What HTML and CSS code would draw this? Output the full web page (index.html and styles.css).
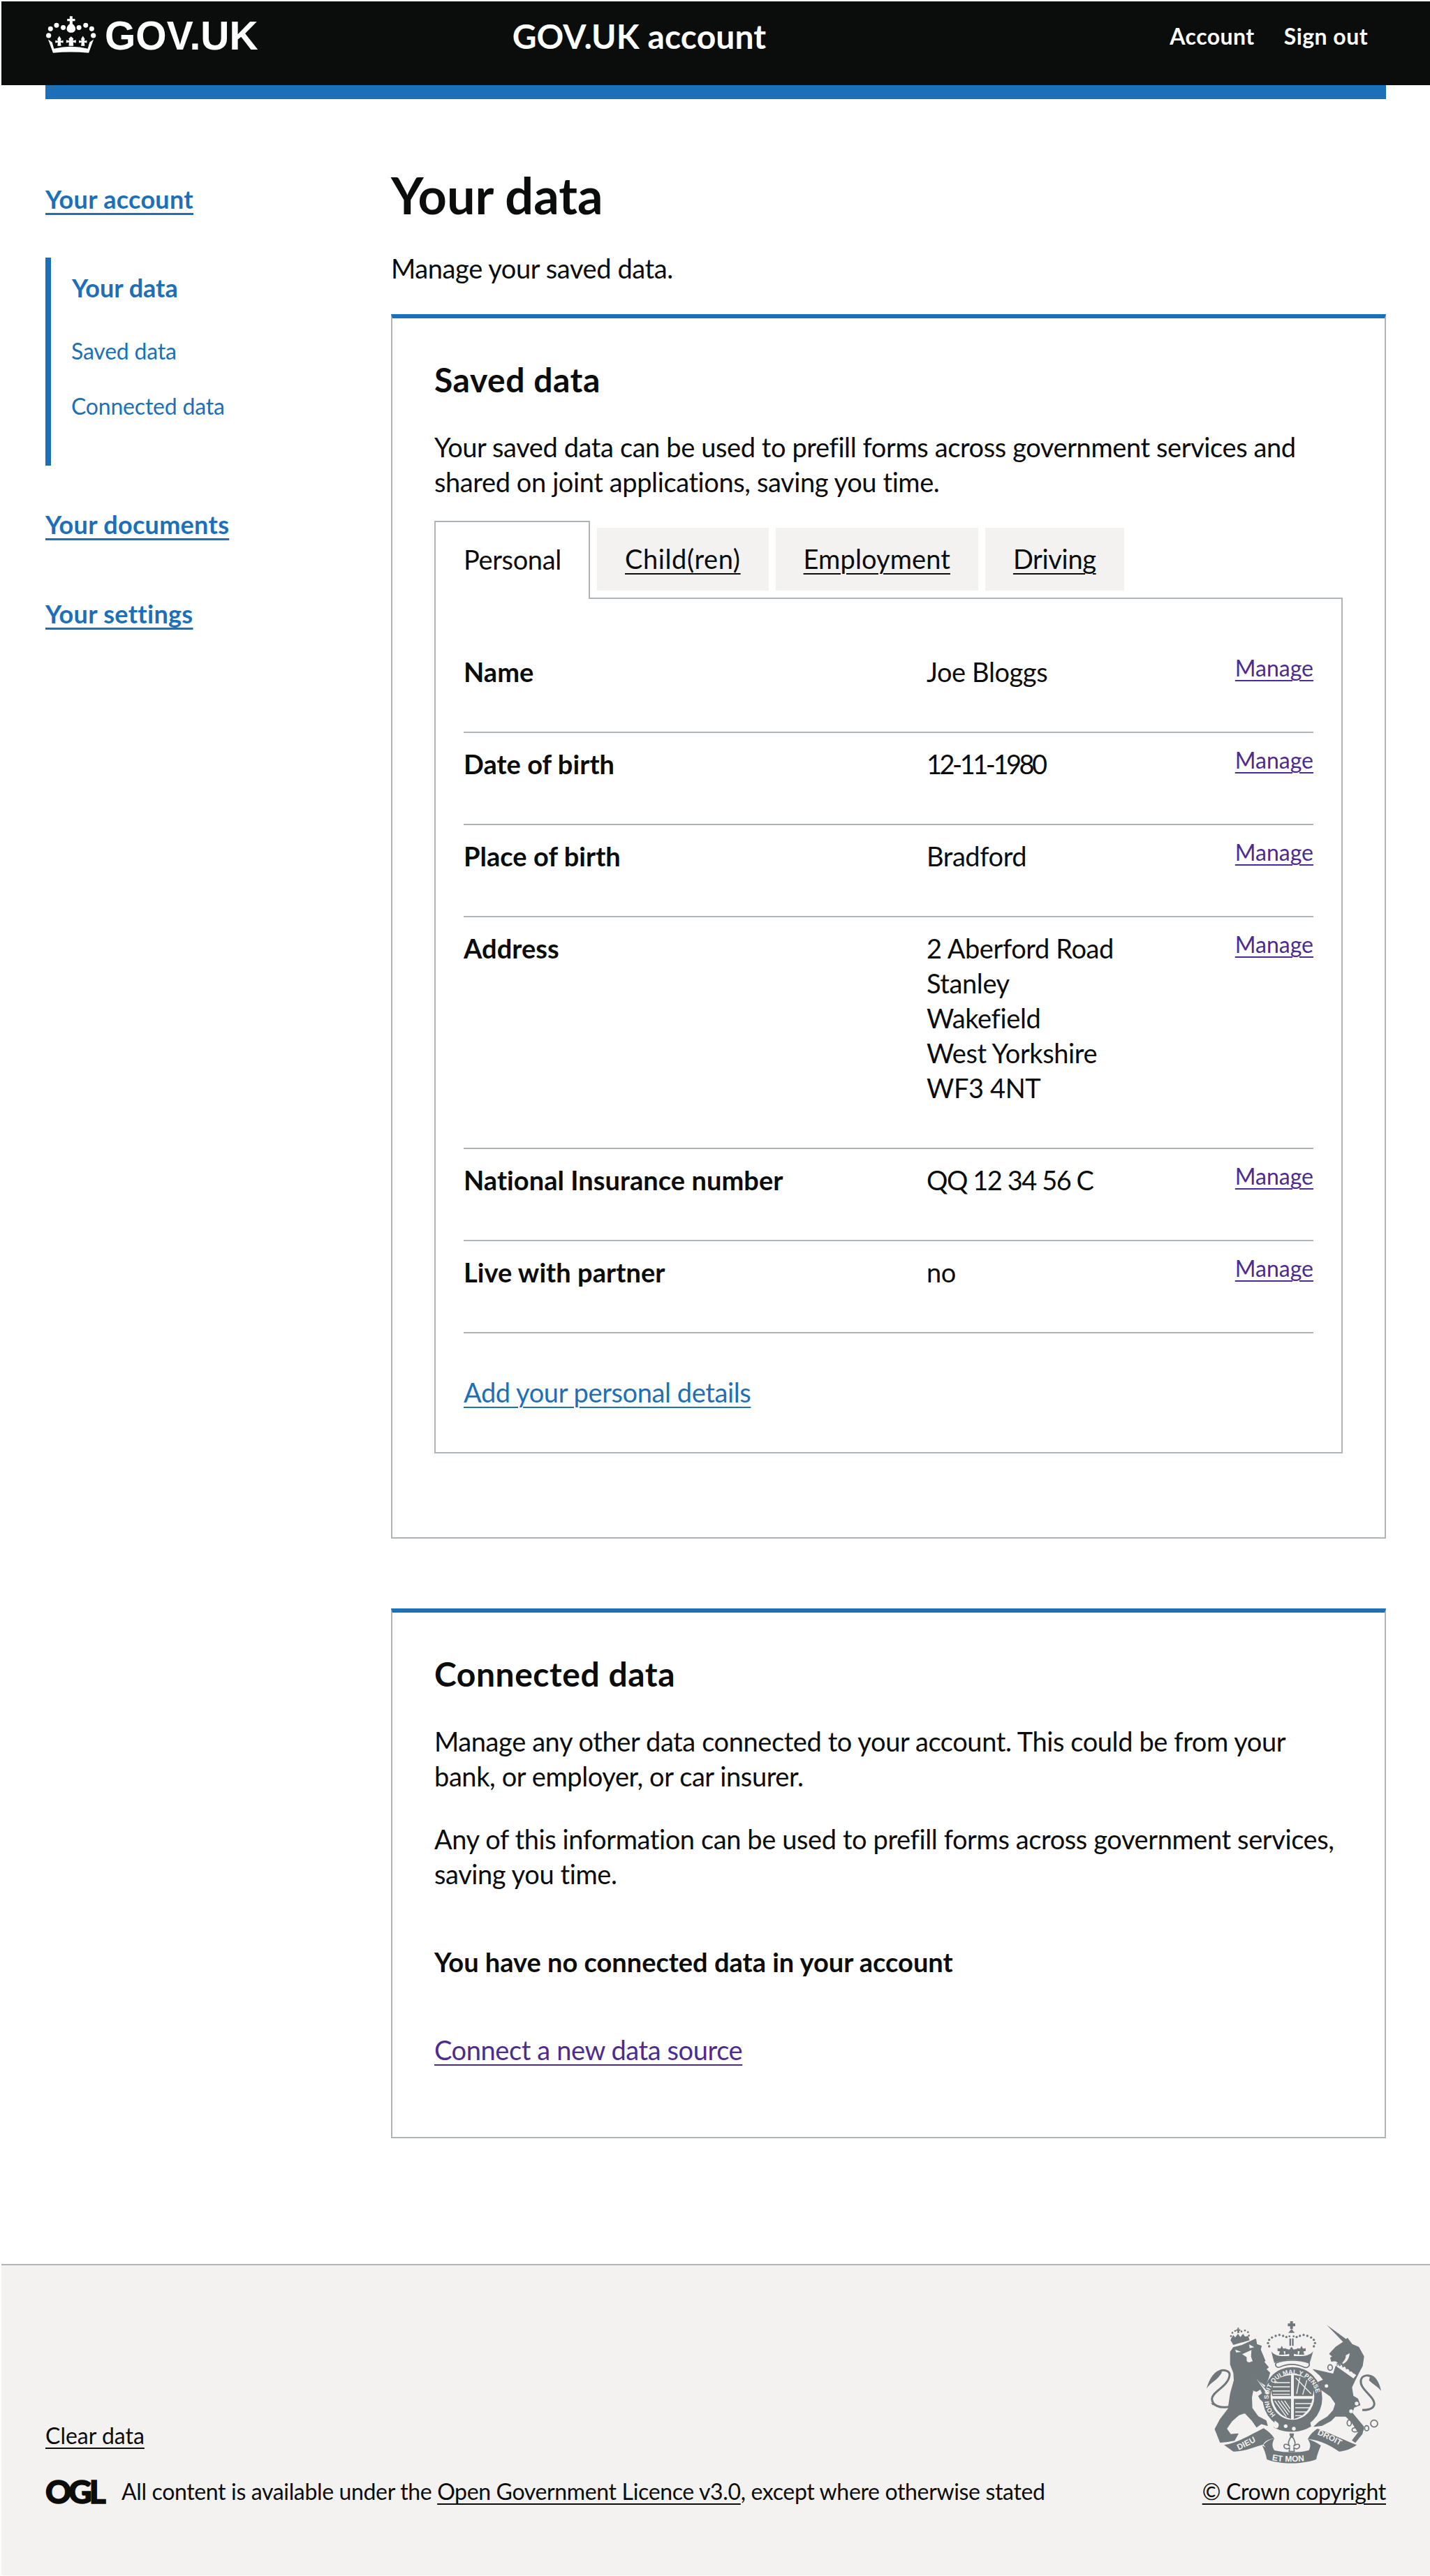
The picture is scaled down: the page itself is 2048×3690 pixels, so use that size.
FILE: index.html
```html
<!doctype html>
<html lang="en">
<head>
<meta charset="utf-8">
<title>Your data - GOV.UK account</title>
<link rel="stylesheet" href="styles.css">
</head>
<body>
<header class="topbar">
  <a class="brand" href="#">
    <svg class="crown" viewBox="198 70 217 158" aria-hidden="true">
      <g fill="#fff">
        <circle cx="209" cy="153" r="11"/><circle cx="402" cy="153" r="11"/>
        <circle cx="217" cy="124" r="10.5"/><circle cx="395" cy="124" r="10.5"/>
        <circle cx="243" cy="109" r="10.5"/><circle cx="369" cy="109" r="10.5"/>
        <circle cx="272" cy="119" r="10.5"/><circle cx="340" cy="119" r="10.5"/>
        <path d="M300,70h12v11h11v10h-11v12c9,6 13,14 13,22c0,9 -8,16 -19,16s-19,-7 -19,-16c0,-8 4,-16 13,-22v-12h-11v-10h11z"/>
        <path d="M306,157l10,9l-2,9l13,-3v13l-12,-3l1,16h-20l1,-16l-12,3v-13l13,3l-2,-9z"/>
        <path d="M255,155l8,13l-2,9l11,-3v11l-11,-2l2,15h-16l2,-15l-11,2v-11l11,3l-2,-9z"/>
        <path d="M357,155l8,13l-2,9l11,-3v11l-11,-2l2,15h-16l2,-15l-11,2v-11l11,3l-2,-9z"/>
        <path d="M207,170 L224,182 L232,210 Q306,192 378,210 L386,182 L403,170 L382,228 Q306,220 228,228 Z"/>
      </g>
    </svg>
    <span class="brand-name">GOV.UK</span>
  </a>
  <a class="service" href="#">GOV.UK account</a>
  <nav class="top-nav">
    <a href="#">Account</a>
    <a href="#">Sign out</a>
  </nav>
</header>

<div class="page">
  <div class="blue-bar"></div>
  <div class="layout">
    <aside class="side">
      <a class="side-head" href="#">Your account</a>
      <div class="side-group">
        <a class="side-current" href="#">Your data</a>
        <a class="side-sub side-sub-first" href="#">Saved data</a>
        <a class="side-sub" href="#">Connected data</a>
      </div>
      <a class="side-head side-docs" href="#">Your documents</a>
      <a class="side-head side-settings" href="#">Your settings</a>
    </aside>

    <main class="content">
      <h1 class="title">Your data</h1>
      <p class="lead">Manage your saved data.</p>

      <section class="card">
        <h2 class="card-title">Saved data</h2>
        <p class="copy">Your saved data can be used to prefill forms across government services and shared on joint applications, saving you time.</p>

        <div class="tabs">
          <ul class="tab-list">
            <li class="tab tab-active">Personal</li>
            <li class="tab tab-wide"><a href="#">Child(ren)</a></li>
            <li class="tab tab-emp"><a href="#">Employment</a></li>
            <li class="tab"><a href="#">Driving</a></li>
          </ul>
          <div class="panel">
            <dl class="rows">
              <div class="row"><dt>Name</dt><dd>Joe Bloggs</dd><a class="manage" href="#">Manage</a></div>
              <div class="row"><dt>Date of birth</dt><dd class="digits-date">12-11-1980</dd><a class="manage" href="#">Manage</a></div>
              <div class="row"><dt>Place of birth</dt><dd>Bradford</dd><a class="manage" href="#">Manage</a></div>
              <div class="row"><dt>Address</dt><dd>2 Aberford Road<br>Stanley<br>Wakefield<br>West Yorkshire<br>WF3 4NT</dd><a class="manage" href="#">Manage</a></div>
              <div class="row"><dt>National Insurance number</dt><dd class="digits-ni">QQ 12 34 56 C</dd><a class="manage" href="#">Manage</a></div>
              <div class="row"><dt>Live with partner</dt><dd>no</dd><a class="manage" href="#">Manage</a></div>
            </dl>
            <a class="add-link" href="#">Add your personal details</a>
          </div>
        </div>
      </section>

      <section class="card card-second">
        <h2 class="card-title">Connected data</h2>
        <p class="copy copy-gap">Manage any other data connected to your account. This could be from your bank, or employer, or car insurer.</p>
        <p class="copy">Any of this information can be used to prefill forms across government services, saving you time.</p>
        <p class="none-msg">You have no connected data in your account</p>
        <a class="connect-link" href="#">Connect a new data source</a>
      </section>
    </main>
  </div>
</div>

<footer class="foot">
  <div class="foot-inner">
    <div class="foot-left">
      <a class="foot-link" href="#">Clear data</a>
      <div class="licence">
        <span class="ogl">OGL</span>
        <span class="licence-text">All content is available under the <a class="foot-link" href="#">Open Government Licence v3.0</a>, except where otherwise stated</span>
      </div>
    </div>
    <div class="foot-right">
      <svg class="crest" viewBox="147 18 750 612" role="img" aria-label="Royal coat of arms">
        <g fill="#6f777b">
          <!-- lion -->
          <path stroke="#6f777b" stroke-width="4" stroke-linejoin="round" d="M250,150 L262,132 L300,122 L358,95 L362,118 L382,125 L378,140 L398,188 L392,192 L412,216 L402,224 L418,240 L412,262 L400,292 L384,282 L360,264 L412,322 L420,362 L402,376 L378,352 L362,322 L346,316 L340,345 L342,392 L368,428 L402,446 L408,466 L382,458 L362,472 L344,446 L312,412 L286,420 L256,446 L232,480 L250,505 L282,502 L266,530 L232,536 L206,538 L184,482 L206,440 L240,396 L250,330 L266,272 L264,240 L250,204 Z"/>
          <path d="M240,386 C205,392 172,382 170,352 C170,320 240,300 246,250 C248,232 222,224 205,232" fill="none" stroke="#6f777b" stroke-width="9"/>
          <path d="M212,226 C182,230 160,262 147,308 C165,280 190,276 212,240 Z"/>
          <path d="M172,378 L165,368 L205,385 Z"/>
          <!-- lion crown -->
          <g>
            <circle cx="252" cy="82" r="4"/><circle cx="258" cy="68" r="4"/><circle cx="270" cy="60" r="4"/><circle cx="284" cy="64" r="4"/><circle cx="297" cy="62" r="4"/><circle cx="312" cy="58" r="4"/><circle cx="325" cy="65" r="4"/><circle cx="329" cy="80" r="4"/>
            <path d="M280,46h6v7h6v6h-6v10h-6v-10h-6v-6h6z"/>
            <path d="M254,90 L262,78 L270,88 L282,72 L292,86 L304,72 L312,84 L326,82 L332,100 L262,120 L250,100 Z"/>
          </g>
          <!-- unicorn -->
          <path d="M663,34 L748,96 L738,112 Z"/>
          <path stroke="#6f777b" stroke-width="4" stroke-linejoin="round" d="M735,108 L752,92 L772,118 L800,130 L822,170 L816,210 L802,236 L786,268 L770,302 L776,340 L796,352 L806,378 L780,388 L772,412 L822,472 L815,502 L786,538 L774,530 L800,496 L770,450 L745,426 L700,426 L680,446 L642,466 L610,470 L632,450 L666,430 L692,402 L702,372 L680,340 L640,312 L628,280 L650,270 L634,250 L606,226 L650,236 L692,246 L702,214 L722,200 L700,188 L684,190 L680,176 L690,170 L676,158 L702,130 Z"/>
          <path d="M816,400 C860,400 880,382 860,352 C838,322 805,300 810,272 C815,248 845,245 865,262" fill="none" stroke="#6f777b" stroke-width="9"/>
          <path d="M850,250 C875,252 890,285 897,318 C880,296 865,292 845,272 Z"/>
          <!-- royal crown -->
          <path d="M506,18h12v10h10v12h-10v12h-12v-12h-10v-12h10z"/>
          <path d="M512,52 l14,16 h-28z"/>
          <path d="M503,92 h7 v32 h-7z M514,92 h7 v32 h-7z"/>
          <g>
            <circle cx="416" cy="126" r="5"/><circle cx="411" cy="112" r="5"/><circle cx="416" cy="98" r="5"/><circle cx="428" cy="88" r="5"/><circle cx="444" cy="81" r="5"/><circle cx="460" cy="77" r="5"/><circle cx="476" cy="81" r="5"/><circle cx="490" cy="86" r="5"/><circle cx="503" cy="83" r="4"/>
            <circle cx="608" cy="126" r="5"/><circle cx="613" cy="112" r="5"/><circle cx="608" cy="98" r="5"/><circle cx="596" cy="88" r="5"/><circle cx="580" cy="81" r="5"/><circle cx="564" cy="77" r="5"/><circle cx="548" cy="81" r="5"/><circle cx="534" cy="86" r="5"/><circle cx="521" cy="83" r="4"/>
          </g>
          <path d="M470,124 l6,12 l12,-2 v12 l-10,2 l4,14 h-24 l4,-14 l-10,-2 v-12 l12,2z"/>
          <path d="M555,124 l6,12 l12,-2 v12 l-10,2 l4,14 h-24 l4,-14 l-10,-2 v-12 l12,2z"/>
          <path d="M512,128 l9,12 l18,-4 v26 l-17,-4 v10 h-20 v-10 l-17,4 v-26 l18,4z"/>
          <path d="M425,148 C440,165 455,168 470,168 H555 C570,168 590,165 605,148 L590,198 C550,180 475,180 438,198 Z"/>
          <path d="M445,198 C480,182 548,182 588,198 C592,212 580,222 565,215 C530,200 495,200 462,215 C448,220 440,208 445,198 Z" fill="none" stroke="#6f777b" stroke-width="5"/>
          <!-- garter -->
          <ellipse cx="516" cy="348" rx="128" ry="133"/>
          <ellipse cx="516" cy="342" rx="94" ry="100" fill="#f3f2f1"/>
          <!-- quarters -->
          <path d="M510,250 C470,252 436,270 428,300 C424,320 426,332 430,340 H510 Z"/>
          <path d="M522,250 C562,252 596,270 604,300 C608,320 606,332 602,340 H522 Z"/>
          <path d="M430,352 H510 V438 C470,430 440,400 430,352 Z"/>
          <path d="M522,352 H602 C592,400 562,430 522,438 Z"/>
          <g fill="none" stroke="#f3f2f1" stroke-width="4">
            <path d="M438,282 H505 M432,300 H505 M430,318 H505 M432,332 H505"/>
            <path d="M530,262 L596,330 M548,260 L534,330 M578,272 L560,334"/>
            <path d="M528,372 H598 M528,390 H590 M528,408 H578 M528,424 H556"/>
            <path d="M440,360 L490,428 M454,360 L498,420 M468,360 L504,410 M482,360 L506,394"/>
          </g>
          <path d="M436,475 C480,500 550,500 596,470 L590,440 C550,470 480,470 446,450 Z"/>
          <circle cx="487" cy="469" r="8" fill="#f3f2f1"/><circle cx="522" cy="480" r="8" fill="#f3f2f1"/>
          <path d="M440,445 C448,452 462,456 456,470 C452,482 440,480 436,470 Z" fill="#f3f2f1"/>
          <!-- ribbons -->
          <path d="M222,550 C280,540 340,505 392,478 C412,490 428,505 438,522 C420,524 400,530 390,548 C350,560 300,580 262,578 Z"/>
          <path d="M386,552 C440,590 580,592 638,552 C630,572 622,592 618,612 C560,634 460,634 406,612 C402,590 396,572 386,552 Z"/>
          <path d="M582,524 C590,508 606,490 624,480 C680,500 740,530 792,550 C770,566 740,578 716,578 C690,560 640,528 582,524 Z"/>
          <path d="M392,548 C405,535 420,525 438,522 C430,540 425,555 440,575 L420,590 Z M638,552 C620,538 600,530 582,524 C592,540 598,555 585,575 L606,590 Z"/>
          <!-- fleur -->
          <path d="M503,500 h20 l-4,20 h-12z"/>
          <path d="M513,512 C528,528 532,548 520,556 C540,538 552,550 544,562 C534,570 526,566 522,560 L524,578 H502 L504,560 C500,566 492,570 482,562 C474,550 486,538 506,556 C494,548 498,528 513,512 Z" fill="#f3f2f1" stroke="#6f777b" stroke-width="5"/>
        </g>
        <!-- light details -->
        <g fill="#f3f2f1">
          <path d="M270,140 L296,150 L274,152 Z M330,118 L352,130 L332,134 Z"/>
          <path d="M300,160 L340,142 L338,170 L345,190 L330,195 L318,172 Z"/>
          <ellipse cx="328" cy="182" rx="9" ry="12"/>
          <path d="M360,264 L416,328 L406,330 Z"/>
          <path d="M344,316 L362,322 L378,312 L385,328 L368,340 Z"/>
          <circle cx="800" cy="325" r="11"/><circle cx="792" cy="372" r="8"/><circle cx="768" cy="405" r="8"/>
          <path d="M705,212 L722,200 L790,250 L778,264 Z"/>
          <path d="M745,165 C748,182 728,200 718,206 C735,205 760,190 762,155 Z"/>
        </g>
        <g fill="none" stroke="#6f777b" stroke-width="5">
          <path d="M706,204 l8,-8 l5,12 l10,-8 l4,14 l12,-6 l3,14 l12,-4 l3,14 l12,-4 l4,14"/>
          <ellipse cx="678" cy="217" rx="10" ry="12" fill="#f3f2f1"/>
          <ellipse cx="662" cy="296" rx="10" ry="10" fill="#f3f2f1"/>
          <ellipse cx="760" cy="455" rx="9" ry="13"/>
          <ellipse cx="785" cy="485" rx="13" ry="9"/>
          <ellipse cx="835" cy="478" rx="9" ry="11"/>
          <circle cx="867" cy="458" r="15"/>
          <path d="M810,500 L822,480"/>
        </g>
        <g class="crest-text">
          <path id="garter" fill="none" d="M447,424 A103,103 0 1 1 586,424"/>
          <text font-size="27"><textPath href="#garter" startOffset="1%">HONI SOIT QUI MAL Y PENSE</textPath></text>
          <path id="dieu" fill="none" d="M285,572 C320,555 360,535 395,515"/>
          <text font-size="35"><textPath href="#dieu">DIEU</textPath></text>
          <path id="etmon" fill="none" d="M428,615 C470,625 560,625 605,610"/>
          <text font-size="36"><textPath href="#etmon">ET MON</textPath></text>
          <path id="droit" fill="none" d="M622,505 C660,520 710,545 750,570"/>
          <text font-size="35"><textPath href="#droit">DROIT</textPath></text>
        </g>
      </svg>
      <a class="foot-link foot-copy" href="#">© Crown copyright</a>
    </div>
  </div>
</footer>
</body>
</html>
```
FILE: styles.css
```css
* { box-sizing: border-box; }
html, body { margin: 0; padding: 0; }
body {
  padding-top: 2px;
  background: #fff;
  color: #0b0c0c;
  font-family: "Lato", "Liberation Sans", sans-serif;
  font-size: 38px;
  line-height: 50px;
  letter-spacing: -0.4px;
}
a { color: inherit; }

.topbar {
  margin-left: 2px;
  height: 120px;
  background: #0b0c0c;
  color: #fff;
  display: flex;
  align-items: flex-start;
  padding-left: 64px;
}
.brand {
  display: flex;
  align-items: flex-start;
  gap: 12px;
  text-decoration: none;
  padding-top: 21px;
}
.crown { width: 72px; height: 53px; display: block; }
.brand-name {
  font-family: "Liberation Sans", sans-serif;
  font-weight: 700;
  font-size: 57px;
  line-height: 56px;
  letter-spacing: 0;
}
.service {
  margin-left: 364px;
  margin-top: 20px;
  font-weight: 700;
  font-size: 48px;
  line-height: 60px;
  letter-spacing: 0.1px;
  text-decoration: none;
}
.top-nav {
  margin-left: auto;
  margin-right: 89px;
  margin-top: 30px;
  display: flex;
  gap: 42px;
  font-weight: 700;
  font-size: 32px;
  line-height: 40px;
  letter-spacing: 0.45px;
}
.top-nav a { text-decoration: none; }

.page { margin-left: 65px; width: 1920px; }
.blue-bar { height: 20px; background: #1d70b8; }
.layout {
  display: grid;
  grid-template-columns: 495px 1425px;
  padding-top: 97px;
}

.side { padding-top: 21px; display: flex; flex-direction: column; align-items: flex-start; }
.side a { color: #1d70b8; }
.side-head {
  font-weight: 700;
  font-size: 36px;
  line-height: 50px;
  letter-spacing: 0.3px;
  text-decoration-thickness: 3px;
  text-underline-offset: 6px;
}
.side-group {
  margin-top: 59px;
  width: 100%;
  height: 298px;
  border-left: 8px solid #1d70b8;
  padding: 18px 0 0 30px;
  display: flex;
  flex-direction: column;
  align-items: flex-start;
}
.side-current {
  font-weight: 700;
  font-size: 36px;
  line-height: 50px;
  letter-spacing: 0;
  text-decoration: none;
}
.side-sub {
  margin-top: 39px;
  margin-left: -1px;
  font-size: 32px;
  line-height: 40px;
  letter-spacing: -0.2px;
  text-decoration: none;
}
.side-sub-first { margin-top: 46px; }
.side-docs { margin-top: 59px; }
.side-settings { margin-top: 78px; }

.title {
  margin: 0;
  font-weight: 700;
  font-size: 72px;
  line-height: 80px;
  letter-spacing: 0;
}
.lead { margin: 40px 0 41px; }

.card {
  border: 2px solid #b1b4b6;
  border-top: 6px solid #1d70b8;
  padding: 60px 60px 120px;
}
.card-second { margin-top: 100px; padding-bottom: 100px; }
.card-title {
  margin: 0 0 43px;
  font-weight: 700;
  font-size: 48px;
  line-height: 56px;
  letter-spacing: 0.55px;
}
.copy { margin: 0; }
.copy-gap { margin-bottom: 40px; }

.tabs { margin-top: 31px; }
.tab-list {
  list-style: none;
  margin: 0;
  padding: 0;
  height: 110px;
  display: flex;
  align-items: flex-start;
  gap: 10px;
}
.tab {
  margin-top: 10px;
  height: 90px;
  padding: 0 40px;
  background: #f3f2f1;
  line-height: 88px;
  letter-spacing: -0.35px;
}
.tab-wide { letter-spacing: 0.6px; }
.tab-emp { letter-spacing: 0.1px; }
.tab a { text-decoration-thickness: 2px; text-underline-offset: 6px; }
.tab-active {
  margin-top: 0;
  width: 223px;
  height: 112px;
  background: #fff;
  border: 2px solid #b1b4b6;
  border-bottom: 0;
  line-height: 106px;
  position: relative;
  z-index: 1;
}
.panel {
  border: 2px solid #b1b4b6;
  padding: 60px 40px 60px;
}
.rows { margin: 0; }
.row {
  display: grid;
  grid-template-columns: 663px 1fr auto;
  padding: 19px 0 61px;
  border-bottom: 2px solid #b1b4b6;
}
.row dt { font-weight: 700; letter-spacing: 0.05px; }
.row dd { margin: 0; }
.row dd.digits-date { letter-spacing: -3.5px; }
.row dd.digits-ni { letter-spacing: -1.45px; }
.manage {
  color: #4c2c92;
  font-size: 32px;
  line-height: 40px;
  letter-spacing: 0;
  text-decoration-thickness: 2px;
  text-underline-offset: 5px;
}
.add-link {
  display: inline-block;
  margin-top: 59px;
  margin-bottom: 1px;
  color: #1d70b8;
  text-decoration-thickness: 2px;
  text-underline-offset: 6px;
}

.none-msg { margin: 76px 0 76px; font-weight: 700; letter-spacing: 0; }
.connect-link {
  display: block;
  color: #4c2c92;
  text-decoration-thickness: 2px;
  text-underline-offset: 6px;
}

.foot {
  margin: 180px 0 0 2px;
  height: 446px;
  background: #f3f2f1;
  border-top: 2px solid #b1b4b6;
  font-size: 32px;
  line-height: 40px;
  letter-spacing: -0.35px;
}
.foot-inner {
  margin-left: 63px;
  width: 1920px;
  height: 100%;
  padding: 80px 0 100px;
  display: flex;
  justify-content: space-between;
  align-items: flex-end;
}
.foot-left { display: flex; flex-direction: column; align-items: flex-start; gap: 40px; letter-spacing: -0.35px; }
.foot-link { text-decoration-thickness: 2px; text-underline-offset: 5px; }
.foot-left > .foot-link { letter-spacing: 0; }
.licence { display: flex; align-items: center; gap: 26px; }
.ogl {
  width: 83px;
  font-weight: 900;
  font-size: 46px;
  line-height: 40px;
  letter-spacing: -4px;
  white-space: nowrap;
  -webkit-text-stroke: 1.5px #0b0c0c;
}
.foot-right { display: flex; flex-direction: column; align-items: center; gap: 20px; }
.foot-copy { letter-spacing: -0.3px; }
.crest { width: 250px; height: 204px; display: block; }
.crest-text { fill: #f3f2f1; font-family: "Liberation Sans", sans-serif; font-weight: 700; letter-spacing: 0; }
```
